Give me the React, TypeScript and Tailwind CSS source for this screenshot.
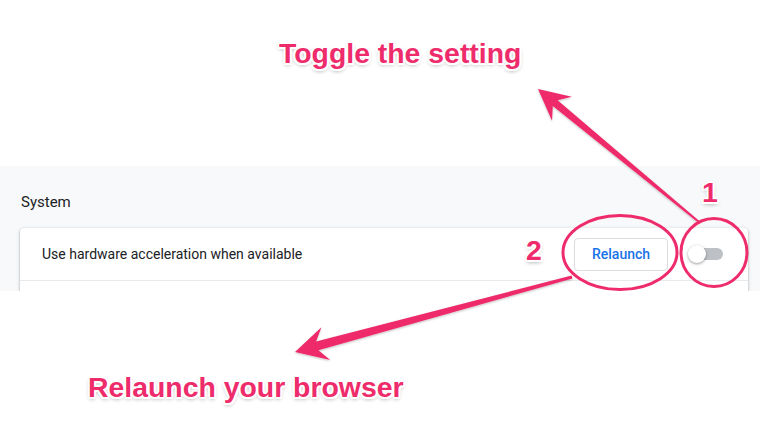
import React from 'react';

type Pt = [number, number];

// tapered "skitch" style arrow, computed as a polygon from tip to tail
const arrowPoints = (tip: Pt, tail: Pt, headLen: number, headW: number, neckW: number, tailW: number) => {
  const dx = tail[0] - tip[0];
  const dy = tail[1] - tip[1];
  const len = Math.hypot(dx, dy);
  const ux = dx / len;
  const uy = dy / len;
  const nx = -uy;
  const ny = ux;
  const p = (s: number, w: number) => `${(tip[0] + ux * s + nx * w).toFixed(1)},${(tip[1] + uy * s + ny * w).toFixed(1)}`;
  return [
    p(0, 0),
    p(headLen, headW),
    p(headLen * 0.72, neckW),
    p(len, tailW),
    p(len, -tailW),
    p(headLen * 0.72, -neckW),
    p(headLen, -headW),
  ].join(' ');
};

const PINK = '#ee2b6b';

const labelClass =
  "absolute font-['Liberation_Sans',Arial,sans-serif] font-bold text-[28.4px] leading-[28px] text-[#ee2b6b] whitespace-nowrap [text-shadow:2px_0_0_#fff,-2px_0_0_#fff,0_2px_0_#fff,0_-2px_0_#fff,1.5px_1.5px_0_#fff,-1.5px_1.5px_0_#fff,1.5px_-1.5px_0_#fff,-1.5px_-1.5px_0_#fff,0_2px_4px_rgba(0,0,0,0.4)]";

const Toggle = () => (
  <div className="relative w-[35px] h-[18px] flex items-center">
    <div className="ml-[5px] w-[30px] h-[12px] rounded-full bg-[#bdc1c6]" />
    <div className="absolute left-0 top-0 w-[18px] h-[18px] rounded-full bg-white shadow-[0_1px_3px_rgba(0,0,0,0.4)]" />
  </div>
);

const App = () => {
  return (
    <div className="relative w-[760px] h-[435px] overflow-hidden bg-white font-['Roboto',Arial,sans-serif]">
      <div className="h-[166px]" />

      <section className="h-[125px] overflow-hidden bg-[#f8f9fa] pt-[26px]">
        <h2 className="pl-[21px] text-[15px] leading-[20px] text-[#202124]">System</h2>
        <div className="mt-[16px] ml-[20px] mr-[12px] rounded-[4px] bg-white shadow-[0_1px_2px_rgba(60,64,67,0.3),0_1px_3px_1px_rgba(60,64,67,0.15)]">
          <div className="flex items-center h-[52px] pl-[22px] pr-[25px]">
            <span className="flex-1 pt-px text-[14px] text-[#202124]">Use hardware acceleration when available</span>
            <button className="w-[94px] h-[33px] rounded-[4px] border border-[#dadce0] bg-white text-[14px] font-medium text-[#1a73e8]">
              Relaunch
            </button>
            <div className="ml-[20px]">
              <Toggle />
            </div>
          </div>
          <div className="h-[40px] border-t border-[#e8eaed]" />
        </div>
      </section>

      {/* annotations */}
      <svg className="absolute inset-0 pointer-events-none" width="760" height="435" viewBox="0 0 760 435">
        <defs>
          <filter id="sh" x="-10%" y="-10%" width="120%" height="120%">
            <feDropShadow dx="0" dy="1" stdDeviation="1" floodColor="#000" floodOpacity="0.25" />
          </filter>
        </defs>
        <g filter="url(#sh)" fill={PINK}>
          <polygon points={arrowPoints([538, 89], [699, 222], 31, 15.5, 3.8, 1)} />
          <polygon points={arrowPoints([295, 352], [572, 277], 32, 17, 4.5, 1.5)} />
        </g>
        <g fill="none" stroke={PINK} strokeWidth="3">
          <ellipse cx="620" cy="252.5" rx="57" ry="37" />
          <ellipse cx="714" cy="252.5" rx="33" ry="34" />
        </g>
      </svg>

      <div className={labelClass} style={{ left: 279, top: 39 }}>Toggle the setting</div>
      <div className={labelClass} style={{ left: 88, top: 373 }}>Relaunch your browser</div>
      <div className={labelClass} style={{ left: 702, top: 178 }}>1</div>
      <div className={labelClass} style={{ left: 526, top: 236 }}>2</div>
    </div>
  );
};

export default App;
